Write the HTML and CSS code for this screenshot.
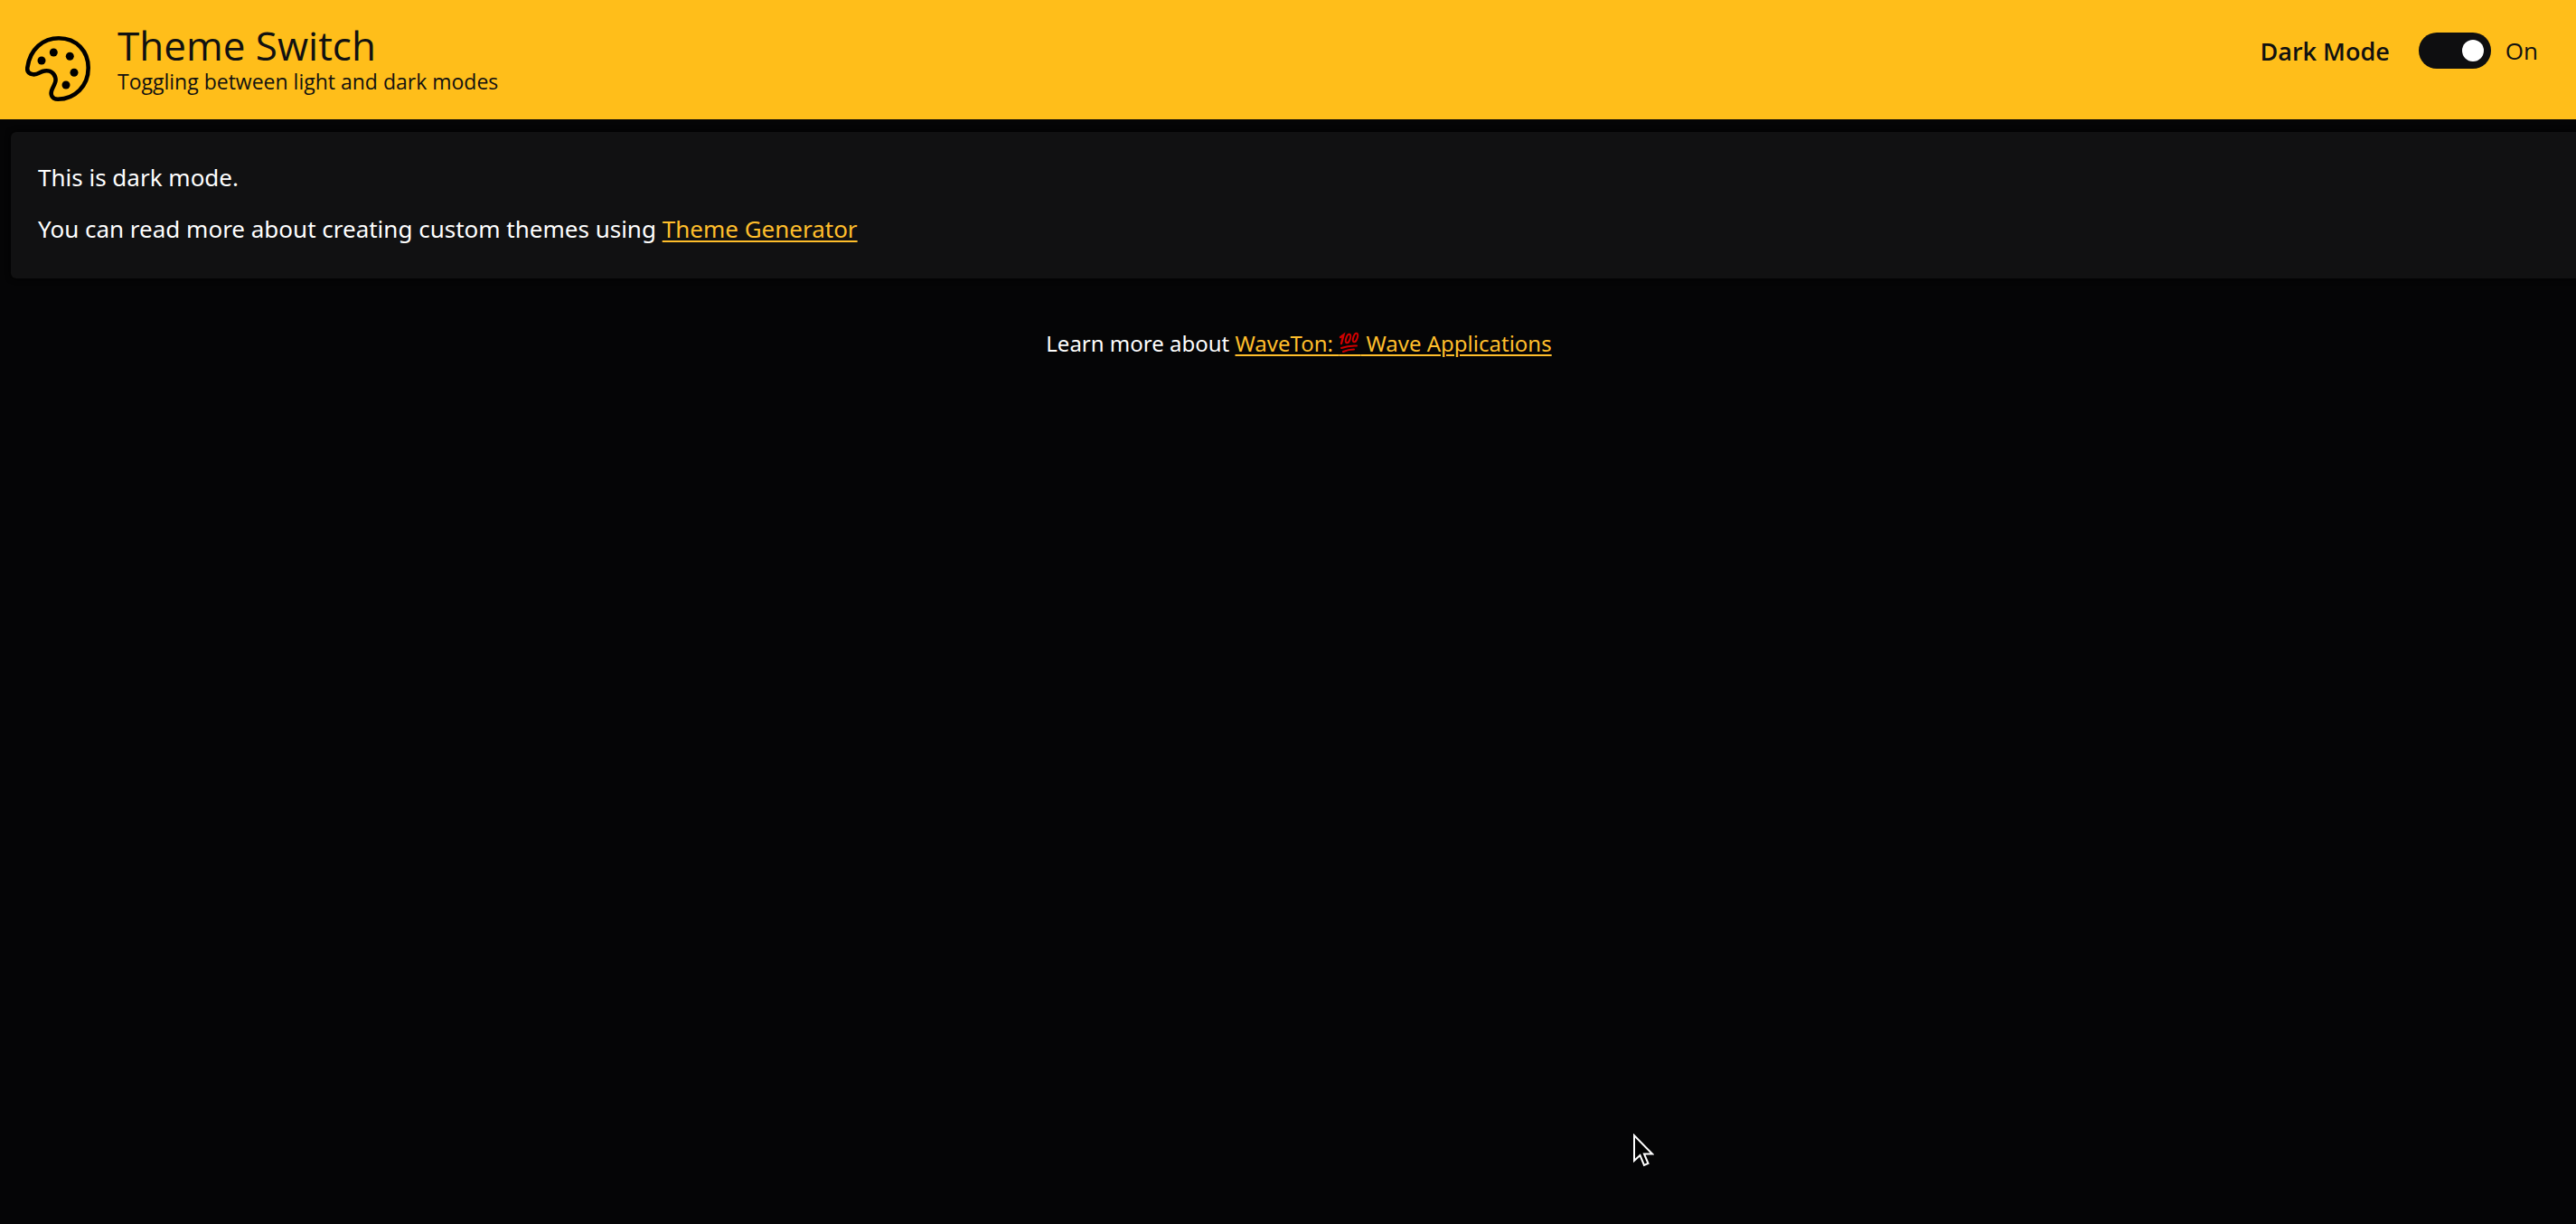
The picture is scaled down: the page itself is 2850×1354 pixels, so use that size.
FILE: index.html
```html
<!DOCTYPE html>
<html lang="en">
<head>
<meta charset="utf-8">
<title>Theme Switch</title>
<link rel="stylesheet" href="styles.css">
</head>
<body>
<header class="header">
  <svg class="logo" viewBox="0 0 72 72" aria-hidden="true">
    <path d="M2.3 35C5 14 20 2.3 37 2.3C57 2.3 69.7 17 69.7 35C69.7 55 55 69.7 36 69.7C29 69.7 27 64 30 58C33 52 34.500 49 33 45C30.500 39 25 37 19 39C15 40.500 13 43 8.500 42.300C4 41.500 1.800 39 2.300 35Z" fill="none" stroke="currentColor" stroke-width="4.600"/>
    <g fill="currentColor"><circle cx="18" cy="27" r="4.500"/><circle cx="31.300" cy="18" r="4.500"/><circle cx="49.300" cy="22.300" r="4.500"/><circle cx="54" cy="40.300" r="4.500"/><circle cx="45" cy="54" r="4.500"/></g>
  </svg>
  <div class="titles">
    <h1 class="title">Theme Switch</h1>
    <p class="subtitle">Toggling between light and dark modes</p>
  </div>
  <div class="mode">
    <label class="mode-label" for="dark-mode">Dark Mode</label>
    <input class="toggle" type="checkbox" role="switch" id="dark-mode" checked>
    <span class="mode-state">On</span>
  </div>
</header>
<main class="card">
  <p class="text">This is dark mode.</p>
  <p class="text">You can read more about creating custom themes using <a class="link" href="#">Theme Generator</a></p>
</main>
<footer class="footer">Learn more about <a class="link" href="#">WaveTon: <span class="emoji">&emsp;<svg class="hundred" viewBox="0 0 24 24" role="img" aria-label="100"><g fill="none" stroke="#d00000" stroke-linecap="round"><path stroke-width="2.400" d="M2 6L5.500 3.500L3 13"/><ellipse cx="10.500" cy="7.500" rx="2.200" ry="5" stroke-width="2" transform="rotate(18 10.500 7.500)"/><ellipse cx="18.500" cy="6.500" rx="2.200" ry="5" stroke-width="2" transform="rotate(18 18.500 6.500)"/><path stroke-width="2" d="M3 18Q11 15 20 15.500M5 22Q11 19.500 17 19.500"/></g></svg></span> Wave Applications</a></footer>
<svg class="cursor" viewBox="0 0 24 38" aria-hidden="true"><path d="M2 2V30L8.500 24L13 35L17.500 33L13 22.500H22Z" fill="#000" stroke="#fff" stroke-width="2"/></svg>
</body>
</html>
```
FILE: styles.css
```css
* { box-sizing: border-box; }
body {
  margin: 0;
  min-height: 100vh;
  overflow-x: hidden;
  background: #050506;
  color: #fff;
  font-family: "Noto Sans", "Open Sans", sans-serif;
  font-size: 26px;
}
h1, p { margin: 0; }
.header {
  display: flex;
  align-items: flex-start;
  gap: 30px;
  height: 132px;
  padding: 20px 42px 20px 28px;
  background: #ffbe1a;
  color: #111;
  font-family: "Open Sans", "Noto Sans", sans-serif;
}
.logo { width: 72px; height: 72px; margin-top: 20px; color: #000; }
.titles { flex: 1; }
.title { font-size: 44px; font-weight: 400; line-height: 60px; }
.subtitle { font-size: 23px; line-height: 20px; }
.mode { display: flex; align-items: center; gap: 16px; height: 72px; }
.mode-label { font-size: 27px; font-weight: 600; margin-right: 16px; }
.toggle {
  appearance: none;
  display: flex;
  align-items: center;
  justify-content: flex-end;
  width: 80px;
  height: 40px;
  margin: 0;
  padding: 8px;
  border-radius: 20px;
  background: #0e0e10;
}
.toggle::before { content: ""; width: 24px; height: 24px; border-radius: 50%; background: #fff; }
.toggle:not(:checked) { justify-content: flex-start; }
.card {
  margin: 14px 0 0 12px;
  padding: 22px 30px 26px;
  background: #111112;
  border-radius: 6px 0 0 6px;
  box-shadow: 0 0 6px #000;
}
.text { line-height: 57px; }
.link { color: #ffbe2b; text-decoration-thickness: 2px; text-underline-offset: 3px; }
.footer { padding: 48px 0 0 24px; text-align: center; font-size: 24px; line-height: 48px; }
.emoji { position: relative; }
.hundred { position: absolute; left: 0; bottom: 5px; width: 24px; height: 24px; }
.cursor { position: absolute; left: 1806px; top: 1254px; width: 24px; height: 38px; }
```
